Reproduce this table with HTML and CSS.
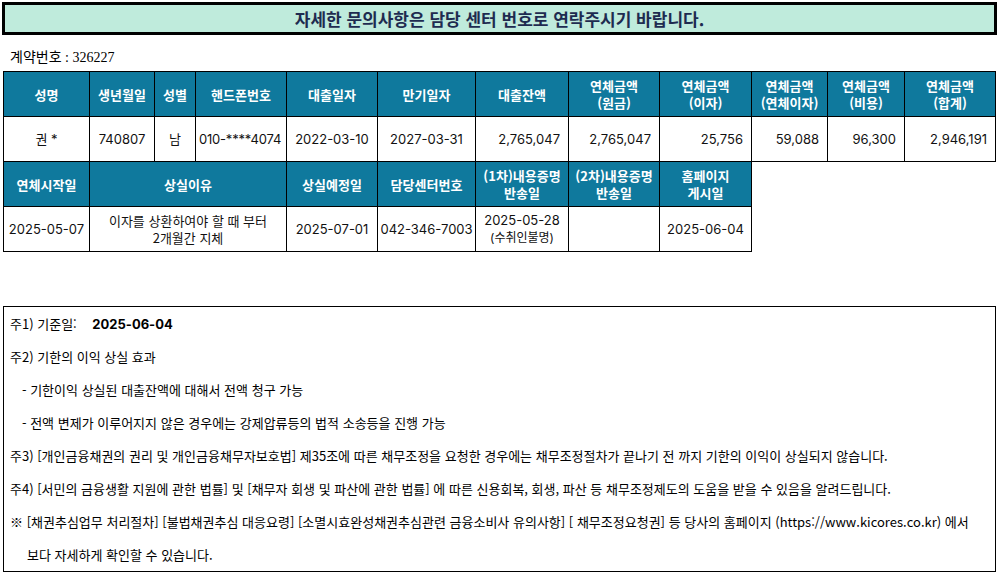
FILE: index.html
```html
<!DOCTYPE html>
<html lang="ko">
<head>
<meta charset="utf-8">
<link rel="stylesheet" href="styles.css">
</head>
<body>
<div class="banner">자세한 문의사항은 담당 센터 번호로 연락주시기 바랍니다.</div>
<div class="contract">계약번호 : 326227</div>
<table class="grid">
  <colgroup>
    <col style="width:86px"><col style="width:65px"><col style="width:41px"><col style="width:91px">
    <col style="width:91px"><col style="width:98px"><col style="width:93px"><col style="width:91px">
    <col style="width:92px"><col style="width:76px"><col style="width:77px"><col style="width:91px">
  </colgroup>
  <tr class="head">
    <th>성명</th><th>생년월일</th><th>성별</th><th>핸드폰번호</th><th>대출일자</th><th>만기일자</th>
    <th>대출잔액</th><th>연체금액<br>(원금)</th><th>연체금액<br>(이자)</th><th>연체금액<br>(연체이자)</th>
    <th>연체금액<br>(비용)</th><th>연체금액<br>(합계)</th>
  </tr>
  <tr class="data">
    <td>권 *</td><td>740807</td><td>남</td><td class="left">010-****4074</td><td>2022-03-10</td><td>2027-03-31</td>
    <td class="num">2,765,047</td><td class="num">2,765,047</td><td class="num">25,756</td><td class="num">59,088</td>
    <td class="num">96,300</td><td class="num">2,946,191</td>
  </tr>
  <tr class="head">
    <th>연체시작일</th><th colspan="3">상실이유</th><th>상실예정일</th><th>담당센터번호</th>
    <th>(1차)내용증명<br>반송일</th><th>(2차)내용증명<br>반송일</th><th>홈페이지<br>게시일</th>
    <td class="blank" colspan="3"></td>
  </tr>
  <tr class="data">
    <td>2025-05-07</td><td colspan="3" class="ko">이자를 상환하여야 할 때 부터<br>2개월간 지체</td><td>2025-07-01</td><td>042-346-7003</td>
    <td class="two">2025-05-28<br><span class="small">(수취인불명)</span></td><td></td><td>2025-06-04</td>
    <td class="blank" colspan="3"></td>
  </tr>
</table>
<div class="notes">
  <p>주1) 기준일: <b class="date">2025-06-04</b></p>
  <p>주2) 기한의 이익 상실 효과</p>
  <p class="ind">- 기한이익 상실된 대출잔액에 대해서 전액 청구 가능</p>
  <p class="ind">- 전액 변제가 이루어지지 않은 경우에는 강제압류등의 법적 소송등을 진행 가능</p>
  <p>주3) [개인금융채권의 권리 및 개인금융채무자보호법] 제35조에 따른 채무조정을 요청한 경우에는 채무조정절차가 끝나기 전 까지 기한의 이익이 상실되지 않습니다.</p>
  <p>주4) [서민의 금융생활 지원에 관한 법률] 및 [채무자 회생 및 파산에 관한 법률] 에 따른 신용회복, 회생, 파산 등 채무조정제도의 도움을 받을 수 있음을 알려드립니다.</p>
  <p>※ [채권추심업무 처리절차] [불법채권추심 대응요령] [소멸시효완성채권추심관련 금융소비사 유의사항] [ 채무조정요청권] 등 당사의 홈페이지 (https://www.kicores.co.kr) 에서</p>
  <p class="ind2">보다 자세하게 확인할 수 있습니다.</p>
</div>
</body>
</html>
```

FILE: styles.css
```css
html, body {
  margin: 0;
  padding: 0;
  background: #ffffff;
}
body {
  font-family: "Noto Sans CJK KR", "Noto Sans", sans-serif;
  color: #000;
}
.banner {
  margin: 2px 3px 0 2px;
  height: 27px;
  border: 3px solid #000;
  background: #bfebdc;
  color: #1e2b50;
  font-weight: bold;
  font-size: 17px;
  line-height: 27px;
  text-align: center;
}
.contract {
  margin: 13px 0 0 10px;
  height: 20px;
  font-family: "Liberation Serif", "Noto Sans CJK KR", serif;
  font-size: 14px;
  line-height: 20px;
}
.grid {
  margin: 3px 0 0 3px;
  border-collapse: collapse;
  table-layout: fixed;
  width: 992px;
}
.grid th, .grid td {
  border: 1px solid #000;
  height: 44px;
  padding: 0;
  text-align: center;
  vertical-align: middle;
  font-size: 13px;
  line-height: 17px;
}
.grid th {
  background: #0f799d;
  color: #fff;
  font-weight: bold;
}
.grid td {
  font-family: "Inter", "Noto Sans CJK KR", sans-serif;
  color: #111;
}
.grid td.ko {
  font-family: "Noto Sans CJK KR", sans-serif;
}
.grid td.num {
  text-align: right;
  padding-right: 8px;
}
.grid td.left {
  text-align: left;
  padding-left: 3px;
  letter-spacing: -0.2px;
}
.grid td.blank {
  border: none;
  background: #fff;
}
.small {
  font-size: 12px;
}
.notes {
  margin: 54px 0 0 3px;
  border: 1px solid #000;
  padding: 0 0 0 6px;
  box-sizing: border-box;
  width: 993px;
}
.notes p {
  margin: 0;
  height: 33px;
  line-height: 33px;
  font-size: 13px;
  white-space: nowrap;
}
.notes .ind {
  padding-left: 12px;
}
.notes .ind2 {
  padding-left: 17px;
}
.notes .date {
  font-family: "Inter", sans-serif;
  margin-left: 12px;
}
```
